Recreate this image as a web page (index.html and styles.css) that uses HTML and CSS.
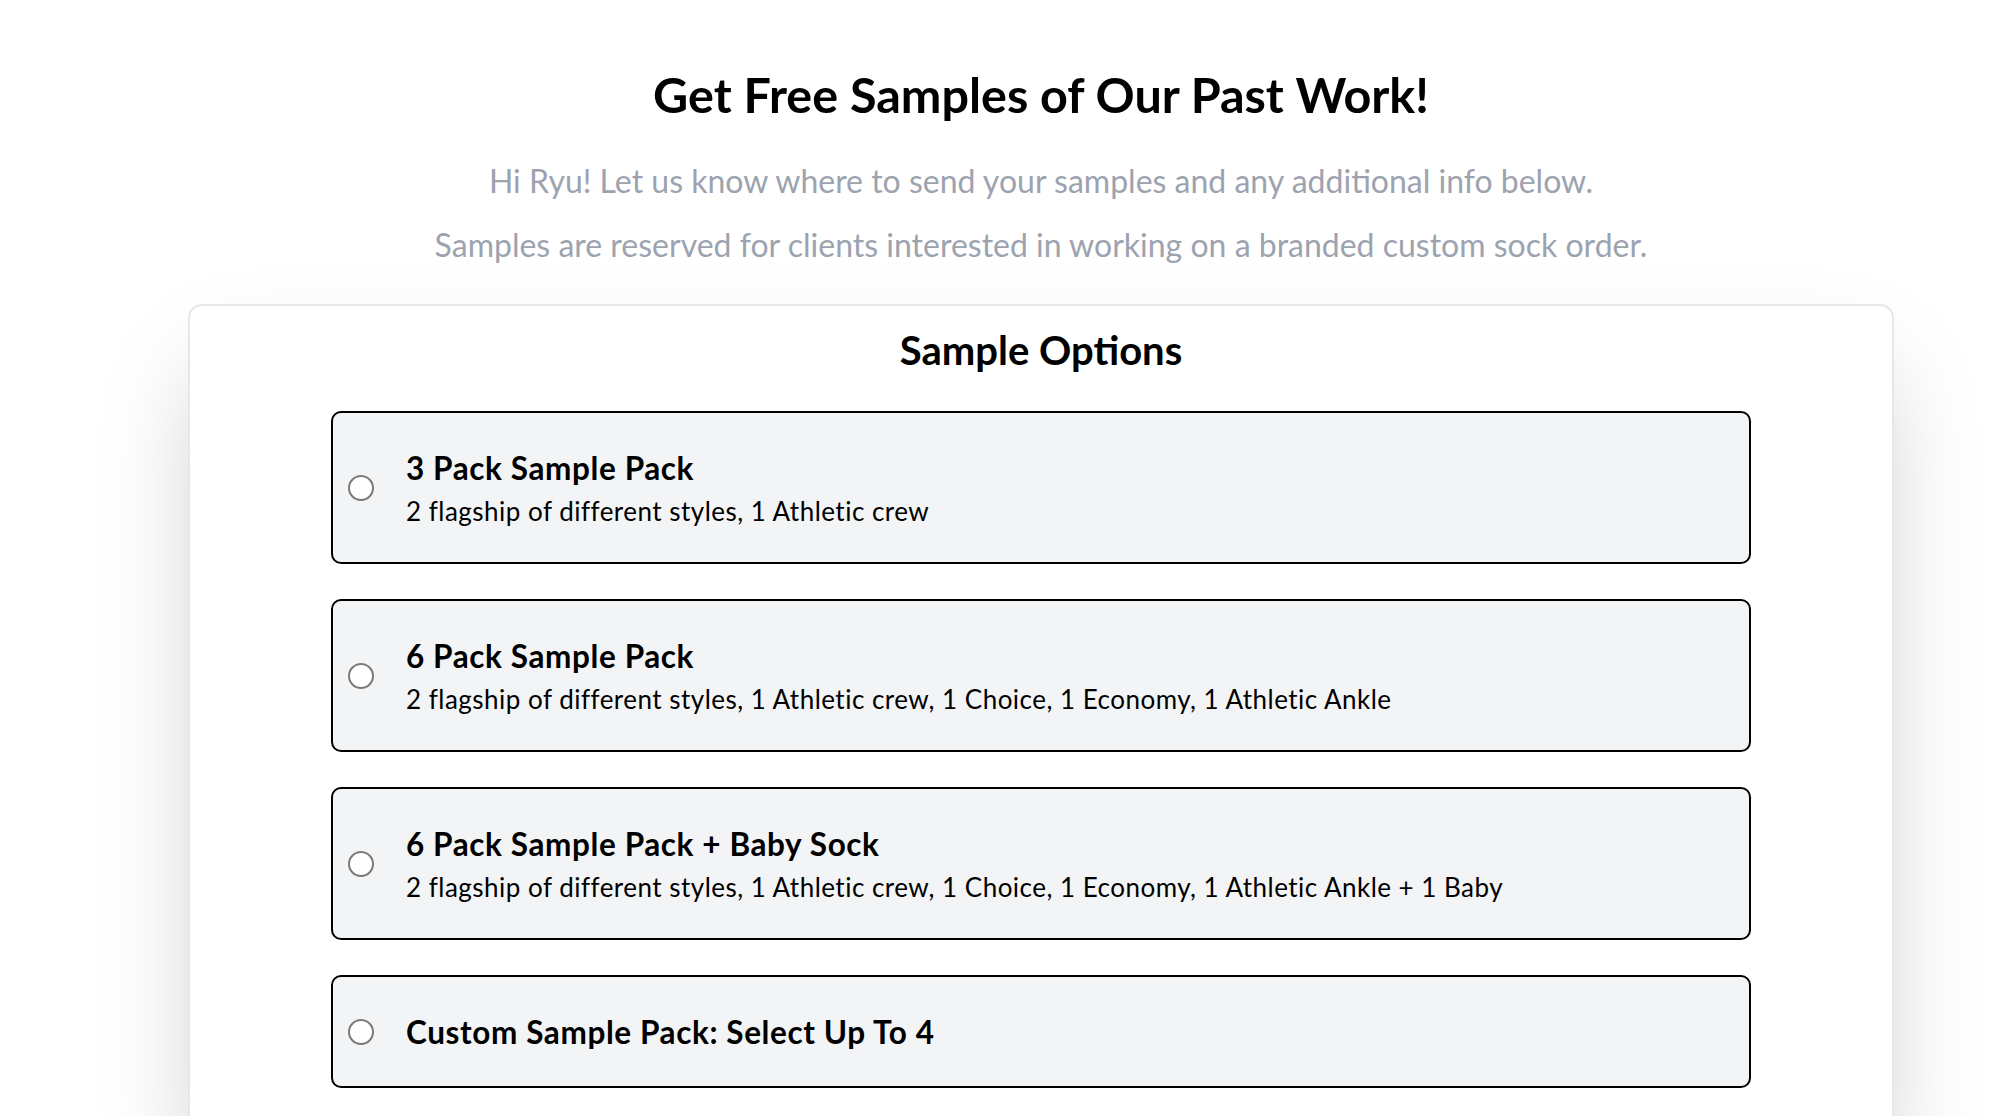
FILE: index.html
```html
<!DOCTYPE html>
<html lang="en">
<head>
<meta charset="utf-8">
<title>Get Free Samples of Our Past Work!</title>
<link rel="stylesheet" href="styles.css">
</head>
<body>
<main class="page">
  <header class="intro">
    <h1 class="intro-title">Get Free Samples of Our Past Work!</h1>
    <p class="intro-text">Hi Ryu! Let us know where to send your samples and any additional info below.</p>
    <p class="intro-text">Samples are reserved for clients interested in working on a branded custom sock order.</p>
  </header>
  <section class="card">
    <h2 class="card-title">Sample Options</h2>
    <div class="options">
      <label class="option">
        <input class="radio" type="radio" name="pack">
        <span class="option-body">
          <span class="option-title">3 Pack Sample Pack</span>
          <span class="option-desc">2 flagship of different styles, 1 Athletic crew</span>
        </span>
      </label>
      <label class="option">
        <input class="radio" type="radio" name="pack">
        <span class="option-body">
          <span class="option-title">6 Pack Sample Pack</span>
          <span class="option-desc">2 flagship of different styles, 1 Athletic crew, 1 Choice, 1 Economy, 1 Athletic Ankle</span>
        </span>
      </label>
      <label class="option">
        <input class="radio" type="radio" name="pack">
        <span class="option-body">
          <span class="option-title">6 Pack Sample Pack + Baby Sock</span>
          <span class="option-desc">2 flagship of different styles, 1 Athletic crew, 1 Choice, 1 Economy, 1 Athletic Ankle + 1 Baby</span>
        </span>
      </label>
      <label class="option">
        <input class="radio" type="radio" name="pack">
        <span class="option-body">
          <span class="option-title">Custom Sample Pack: Select Up To 4</span>
        </span>
      </label>
    </div>
  </section>
</main>
</body>
</html>
```

FILE: styles.css
```css
* { box-sizing: border-box; }

html, body {
  margin: 0;
  padding: 0;
  background: #ffffff;
}

body {
  font-family: "Lato", "Open Sans", sans-serif;
  color: #000000;
}

.page {
  padding: 0 110px 80px 188px;
}

.intro {
  display: flex;
  flex-direction: column;
  align-items: center;
  padding-top: 63px;
}

.intro-title {
  margin: 0;
  font-size: 48.5px;
  line-height: 62px;
  font-weight: 700;
  color: #000000;
}

.intro-text {
  margin: 0;
  font-size: 32px;
  line-height: 64px;
  color: #9ca3af;
  font-weight: 400;
}

.intro-title + .intro-text {
  margin-top: 24px;
}

.card {
  margin-top: 27px;
  border: 2px solid #e7e7eb;
  border-radius: 14px;
  background: #ffffff;
  padding: 18px 0 60px;
  box-shadow: 0 50px 100px -24px rgba(0, 0, 0, 0.25);
}

.card-title {
  margin: 0 0 35px;
  text-align: center;
  font-size: 40px;
  line-height: 52px;
  font-weight: 700;
}

.options {
  width: 1420px;
  margin: 0 auto;
  display: flex;
  flex-direction: column;
  gap: 35px;
}

.option {
  display: flex;
  align-items: center;
  border: 2px solid #000000;
  border-radius: 10px;
  background: #f3f4f6;
  padding: 32px 32px 31px 15px;
  cursor: pointer;
}

.radio {
  appearance: none;
  -webkit-appearance: none;
  margin: 0 32px 0 0;
  width: 26px;
  height: 26px;
  flex: 0 0 26px;
  border: 2px solid #7a7a7a;
  border-radius: 50%;
  background: #ffffff;
}

.option-body {
  display: flex;
  flex-direction: column;
}

.option-title {
  font-size: 31.5px;
  line-height: 46px;
  letter-spacing: 0.6px;
  font-weight: 700;
  color: #000000;
}

.option-desc {
  font-size: 26px;
  line-height: 40px;
  letter-spacing: 0.48px;
  color: #000000;
}
```
